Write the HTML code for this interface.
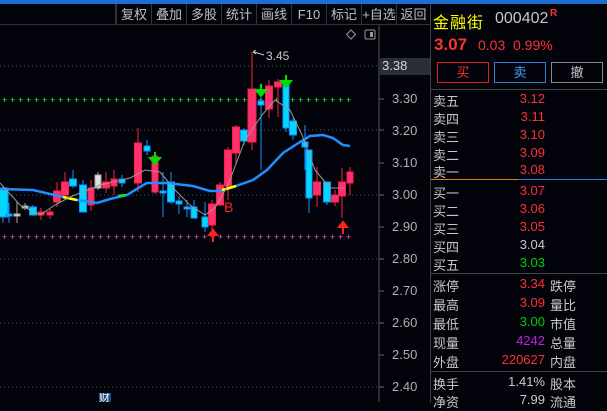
<!DOCTYPE html>
<html><head><meta charset="utf-8"><style>
*{margin:0;padding:0;box-sizing:border-box}
body{width:607px;height:402px;background:#03030c;overflow:hidden;position:relative;font-family:"Liberation Sans","Noto Sans CJK SC",sans-serif;color:#c8c8c8}
.top{position:absolute;left:0;top:0;width:607px;height:4px;background:#1a6fd0}
.tb{position:absolute;top:4px;left:115px;height:21px;display:flex;border-left:2px solid #333}
.tb div{width:35px;height:21px;line-height:21px;font-size:13px;color:#c0c0c0;border-right:1px solid #333;text-align:center;white-space:nowrap;overflow:hidden}
.hl{position:absolute;top:24px;left:0;width:430px;height:1px;background:#333}
.rp{position:absolute;left:430px;top:4px;width:177px;height:398px;border-left:1px solid #444}
.r{position:absolute;font-size:13px;white-space:nowrap}
.red{color:#ff3030}.grn{color:#00d000}.wht{color:#c8c8c8}.pur{color:#c020e0}
.ax{position:absolute;font-size:13px;color:#b0b0b0;left:392px}
</style></head><body>
<div class="top"></div>
<div class="tb"><div>复权</div><div>叠加</div><div>多股</div><div>统计</div><div>画线</div><div>F10</div><div>标记</div><div>+自选</div><div style="border:none;width:33px">返回</div></div>
<div class="hl"></div>
<svg id="ch" width="430" height="402" style="position:absolute;left:0;top:0"></svg>
<div style="position:absolute;left:379px;top:58px;width:51px;height:17px;background:#2a2e36"></div>
<div class="ax" style="left:382px;top:58px;color:#d0d8e8">3.38</div>
<div class="ax" style="top:91px">3.30</div>
<div class="ax" style="top:123px">3.20</div>
<div class="ax" style="top:155px">3.10</div>
<div class="ax" style="top:187px">3.00</div>
<div class="ax" style="top:219px">2.90</div>
<div class="ax" style="top:251px">2.80</div>
<div class="ax" style="top:283px">2.70</div>
<div class="ax" style="top:315px">2.60</div>
<div class="ax" style="top:347px">2.50</div>
<div class="ax" style="top:379px">2.40</div>
<div style="position:absolute;left:99px;top:393px;width:12px;height:9px;background:#1a4a80;color:#fff;font-size:11px;line-height:11px;overflow:hidden">财</div>
<div class="rp">
<div class="r" style="left:2px;top:5px;font-size:16px;color:#ffff00;letter-spacing:1px">金融街</div>
<div class="r" style="left:64px;top:6px;font-size:16px;color:#c8c8c8">000402</div>
<div class="r" style="left:119px;top:4px;font-size:10px;color:#ff3030;font-weight:bold">R</div>
<div class="r" style="left:3px;top:31px;font-size:17px;color:#ff3030;font-weight:bold">3.07</div>
<div class="r" style="left:47px;top:33px;font-size:14px;color:#ff3030">0.03</div>
<div class="r" style="left:82px;top:33px;font-size:14px;color:#ff3030">0.99%</div>
<div style="position:absolute;left:6px;top:58px;width:52px;height:21px;border:1px solid #e02020;color:#ff3030;text-align:center;line-height:19px;font-size:13px">买</div>
<div style="position:absolute;left:63px;top:58px;width:52px;height:21px;border:1px solid #3080d0;color:#40a0ff;text-align:center;line-height:19px;font-size:13px">卖</div>
<div style="position:absolute;left:120px;top:58px;width:52px;height:21px;border:1px solid #888;color:#c8c8c8;text-align:center;line-height:19px;font-size:13px">撤</div>
<div style="position:absolute;left:0;top:85px;width:177px;height:1px;background:#444"></div>
<div style="position:absolute;left:0;top:175px;width:87px;height:1px;background:#e08000"></div>
<div style="position:absolute;left:87px;top:175px;width:90px;height:1px;background:#2080e0"></div>
<div style="position:absolute;left:0;top:269px;width:177px;height:1px;background:#444"></div>
<div style="position:absolute;left:0;top:367px;width:177px;height:1px;background:#444"></div>
</div>
<div id="rows"></div>
<script>
var rows=[["卖五","3.12","red",91],["卖四","3.11","red",109],["卖三","3.10","red",127],["卖二","3.09","red",145],["卖一","3.08","red",162],["买一","3.07","red",183],["买二","3.06","red",201],["买三","3.05","red",219],["买四","3.04","wht",237],["买五","3.03","grn",255],
["涨停","3.34","red",276,"跌停"],["最高","3.09","red",295,"量比"],["最低","3.00","grn",314,"市值"],["现量","4242","pur",333,"总量"],["外盘","220627","red",352,"内盘"],["换手","1.41%","wht",374,"股本"],["净资","7.99","wht",392,"流通"]];
var h="";rows.forEach(function(r){h+='<div class="r" style="left:433px;top:'+r[3]+'px;color:#c8c8c8">'+r[0]+'</div><div class="r '+r[2]+'" style="left:465px;width:80px;text-align:right;top:'+r[3]+'px">'+r[1]+'</div>';if(r[4])h+='<div class="r" style="left:550px;top:'+r[3]+'px">'+r[4]+'</div>'});
document.getElementById("rows").innerHTML=h;
var s="";
s+='<line x1="379" y1="25" x2="379" y2="402" stroke="#555"/>';
[66,130,195,259,323,387].forEach(function(y){s+='<line x1="0" y1="'+y+'" x2="378" y2="'+y+'" stroke="#555" stroke-dasharray="1 3"/>'});
[99,130,163,195,227,259,291,323,355,387].forEach(function(y){s+='<line x1="379" y1="'+y+'" x2="384" y2="'+y+'" stroke="#666"/>'});
for(var x=2;x<352;x+=8){s+='<text x="'+x+'" y="103" fill="#20ff20" font-size="9" font-family="Liberation Sans">+</text><text x="'+x+'" y="240" fill="#ff60c0" font-size="9" font-family="Liberation Sans">+</text>'}
s+='<path d="M351 30 l4.5 4.5 l-4.5 4.5 l-4.5 -4.5 z" stroke="#999" fill="none"/><rect x="365" y="30" width="10" height="9" rx="1.5" stroke="#999" fill="none"/><rect x="370" y="32" width="3" height="5" fill="#999"/>';
var C=[[3,10,188,217,186,223,'c'],[9,6,214,216,203,223,'c'],[17,6,214,216,202,223,'w'],[25,6,206,208,203,210,'w'],[33,7,207,215,205,216,'c'],[41,6,212,215,208,220,'r'],[50,6,212,215,209,219,'r'],[57,7,191,202,182,207,'r'],[65,7,182,195,172,198,'r'],[73,7,179,186,170,188,'c'],[83,7,185,212,180,212,'c'],[91,6,188,205,180,211,'r'],[98,6,175,188,172,190,'w'],[106,7,182,188,172,193,'r'],[114,6,179,186,170,195,'r'],[122,6,179,183,175,187,'c'],[138,7,143,183,128,192,'r'],[147,6,146,151,140,155,'c'],[155,6,156,192,156,194,'r'],[163,6,191,193,172,217,'c'],[171,7,182,202,172,204,'c'],[179,6,201,204,196,214,'c'],[187,6,207,209,200,217,'c'],[194,6,207,218,200,219,'c'],[205,6,217,227,202,232,'c'],[212,7,204,225,200,230,'r'],[220,7,185,205,182,206,'r'],[228,7,150,186,147,200,'r'],[236,7,127,153,125,163,'r'],[244,7,130,141,128,145,'c'],[252,8,89,142,52,150,'r'],[261,6,101,105,98,170,'c'],[269,7,86,109,80,118,'r'],[278,7,82,87,79,117,'r'],[286,6,85,128,82,132,'c'],[293,7,121,135,118,140,'c'],[305,6,142,147,125,170,'c'],[309,6,150,198,150,213,'c'],[317,7,182,195,167,207,'r'],[327,7,182,202,182,205,'c'],[335,7,195,202,190,206,'r'],[342,7,182,196,168,218,'r'],[350,6,172,183,167,195,'r']];
C.forEach(function(c){var x=c[0],w=c[1];var col=c[6]=='r'?'#ff2040':c[6]=='c'?'#1090ff':'#aaa';var f=c[6]=='r'?'#ff3070':c[6]=='c'?'#00d8ff':'#e0e0e0';
s+='<line x1="'+x+'" y1="'+c[4]+'" x2="'+x+'" y2="'+c[5]+'" stroke="'+col+'"/>';s+='<rect x="'+(x-w/2)+'" y="'+c[2]+'" width="'+w+'" height="'+Math.max(1,c[3]-c[2])+'" fill="'+f+'" stroke="'+col+'" stroke-width="1"/>'});
s+='<polyline fill="none" stroke="#1e90ff" stroke-width="2.5" points="0,189 33,190 50,194 63,197 77,200 97,203 110,199 127,195 140,187 147,183 167,183 193,186 210,191 220,191 233,187 253,180 267,170 283,153 300,142 310,136 323,135 333,138 343,145 350,146"/>';
s+='<polyline fill="none" stroke="#ffff00" stroke-width="2.5" points="63,197 77,200"/><polyline fill="none" stroke="#ffff00" stroke-width="2.5" points="222,190 236,186"/><polyline fill="none" stroke="#20e020" stroke-width="2.5" points="118,196 126,195"/>';
s+='<polyline fill="none" stroke="#999" stroke-width="1" points="0,183 20,205 40,215 55,205 70,197 100,185 130,178 145,170 160,172 175,190 190,205 205,215 215,208 228,185 245,140 262,115 275,100 290,110 302,135 315,170 330,188 345,188"/>';
function arr(x,y,c,d){if(d)s+='<path d="M'+x+' '+y+' v8 M'+(x-5)+' '+(y+6)+' h10 l-5 6 z" stroke="'+c+'" fill="'+c+'" stroke-width="2"/>';else s+='<path d="M'+x+' '+(y+12)+' v-8 M'+(x-4)+' '+(y+5)+' h8 l-4 -5 z" stroke="'+c+'" fill="'+c+'" stroke-width="2"/>'}
arr(155,152,'#00dd00',1);arr(261,84,'#00dd00',1);arr(286,75,'#00dd00',1);arr(213,230,'#ff2020',0);arr(343,222,'#ff2020',0);
s+='<text x="224" y="212" fill="#ff2020" font-size="14" font-family="Liberation Sans">B</text>';
s+='<path d="M253 52 l3 -2 M253 52 l3 2 M254 52 l10 3" stroke="#ccc" fill="none"/><text x="266" y="60" fill="#c8c8c8" font-size="12" font-family="Liberation Sans">3.45</text>';
document.getElementById("ch").innerHTML=s;
</script>
</body></html>
